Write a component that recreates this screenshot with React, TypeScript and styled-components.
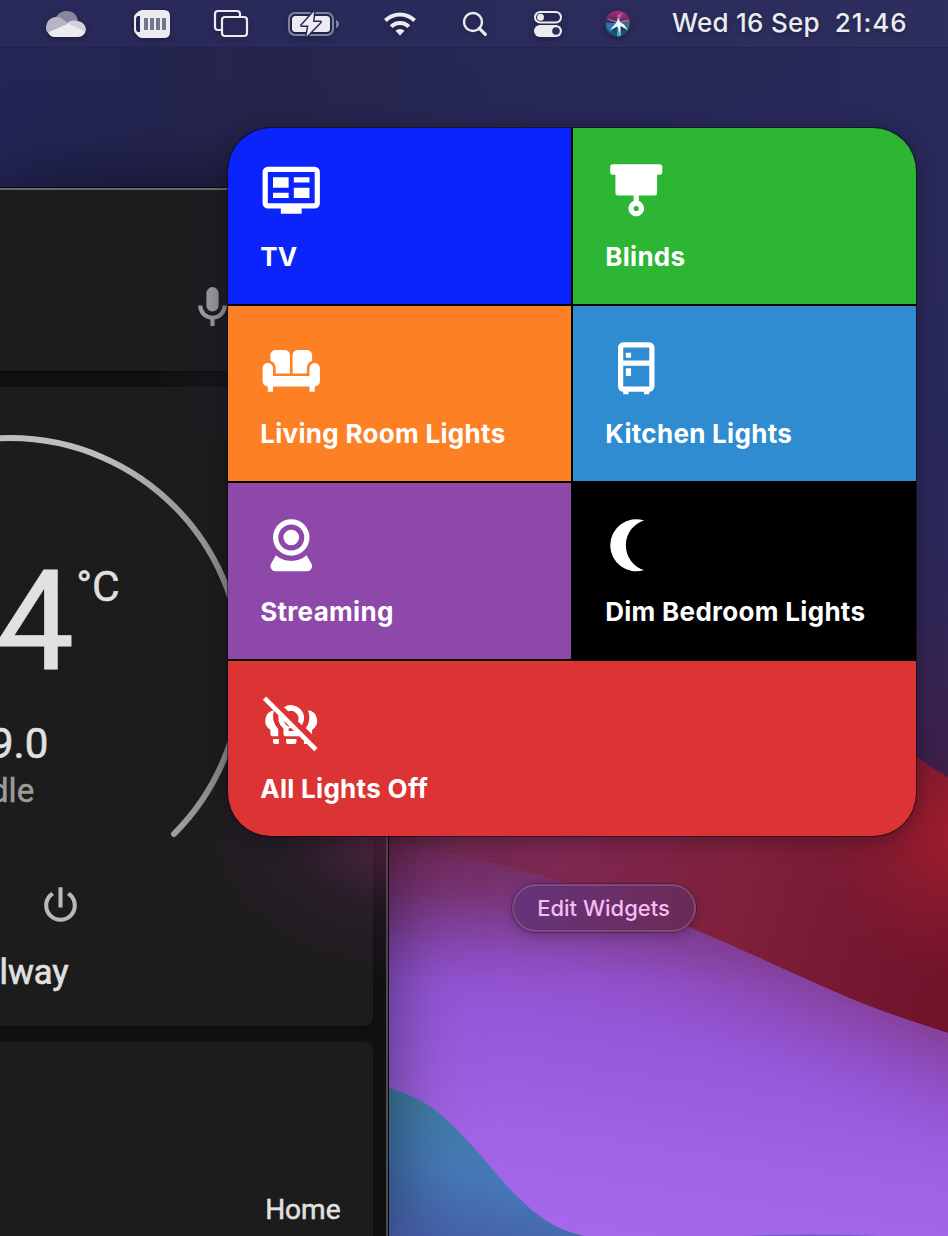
import React from 'react';
import styled, { createGlobalStyle } from 'styled-components';

const GlobalStyle = createGlobalStyle`
  * { box-sizing: border-box; }
  body { margin: 0; background: #25264f; }
`;

const Desktop = styled.main`
  position: relative;
  width: 948px;
  height: 1236px;
  overflow: hidden;
  background: #28295a;
  font-family: Inter, 'Liberation Sans', sans-serif;
`;

const WallpaperArt = styled.svg`
  position: absolute;
  inset: 0;
`;

/* ---------- menu bar ---------- */

const MenuBar = styled.header`
  position: relative;
  display: flex;
  align-items: center;
  height: 48px;
  padding-left: 46px;
  background: linear-gradient(90deg, #29295a 0%, #292b5b 40%, #2e2e5e 100%);
  border-bottom: 1px solid #26224f;
  color: #ebebf0;
`;

const StatusItem = styled.svg<{ $before?: number }>`
  flex: none;
  margin-left: ${(p) => p.$before ?? 0}px;
  overflow: visible;
  filter: drop-shadow(0 2px 3px rgba(0, 0, 0, 0.3));
`;

const Clock = styled.div`
  display: flex;
  gap: 15px;
  margin: -2px 0 0 41px;
  font-size: 26px;
  font-weight: 500;
  line-height: 32px;
  white-space: nowrap;
  text-shadow: 0 2px 4px rgba(0, 0, 0, 0.3);
`;

const ClockPart = styled.span<{ $tracking: number }>`
  letter-spacing: ${(p) => p.$tracking}px;
`;

/* ---------- dashboard window ---------- */

const Window = styled.section`
  position: absolute;
  left: 0;
  top: 187px;
  width: 389px;
  height: 1049px;
  display: flex;
  flex-direction: column;
  gap: 16px;
  padding-right: 14px;
  background: #111;
  border-top: 1px solid #08081c;
  border-right: 1px solid #08080a;
  box-shadow: inset -2px 0 0 #4c4c4e, inset 0 2px 0 #686b6b, 0 0 70px rgba(0, 0, 0, 0.5);
  font-family: Roboto, sans-serif;
  color: #e1e1e1;

  &::after {
    content: '';
    position: absolute;
    inset: 2px 0 0 0;
    pointer-events: none;
    background:
      radial-gradient(ellipse 215px 155px at 400px 640px, rgba(125, 45, 95, 0.62), rgba(80, 35, 80, 0.24) 50%, transparent 100%),
      linear-gradient(90deg, transparent 150px, rgba(32, 32, 48, 0.35) 228px) 0 0 / 100% 250px no-repeat;
  }
`;

const Card = styled.article<{ $height: number; $flat?: boolean }>`
  position: relative;
  flex: none;
  width: 373px;
  height: ${(p) => p.$height}px;
  background: #1c1c1c;
  border-radius: ${(p) => (p.$flat ? '0' : '0 8px 8px 0')};
  box-shadow: 0 2px 3px rgba(0, 0, 0, 0.35);
  overflow: hidden;
`;

const SearchCard = styled(Card)`
  margin-top: 2px;
  display: flex;
  align-items: flex-start;
  padding: 93px 0 0 188px;
`;

const ThermostatCard = styled(Card)`
  padding-top: 165px;
`;

const Dial = styled.svg`
  position: absolute;
  inset: 0;
`;

const Temperature = styled.div`
  display: flex;
  align-items: flex-start;
  margin-left: -4px;
  height: 171px;
  font-size: 139px;
  line-height: 139px;
  -webkit-text-stroke: 0.8px currentColor;
`;

const Unit = styled.sup`
  margin: 13px 0 0 2px;
  font-size: 42.5px;
  line-height: 43px;
  vertical-align: baseline;
  -webkit-text-stroke: 0.4px currentColor;
`;

const Target = styled.div`
  margin-left: -10px;
  height: 51px;
  font-size: 42px;
  line-height: 42px;
  -webkit-text-stroke: 0.6px currentColor;
`;

const Mode = styled.div`
  margin-left: -10px;
  height: 107px;
  font-size: 33px;
  line-height: 33px;
  color: #9b9b9b;
  -webkit-text-stroke: 0.5px currentColor;
`;

const PowerRow = styled.div`
  height: 74px;
  padding-left: 36px;
`;

const RoomName = styled.div`
  margin-left: -0.5px;
  font-size: 34.5px;
  line-height: 35px;
  -webkit-text-stroke: 0.7px currentColor;
`;

const HomeCard = styled(Card)`
  display: flex;
  justify-content: flex-end;
  padding: 154px 32.5px 0 0;
  font-size: 28px;
  line-height: 28px;
  -webkit-text-stroke: 0.5px currentColor;
`;

/* ---------- widget ---------- */

const WidgetColumn = styled.aside`
  position: absolute;
  left: 228px;
  top: 128px;
  width: 688px;
  display: flex;
  flex-direction: column;
  align-items: center;
  gap: 48px;
`;

const Widget = styled.div`
  width: 688px;
  height: 708px;
  display: grid;
  grid-template-columns: 343px 343px;
  grid-template-rows: repeat(4, 1fr);
  gap: 2px;
  overflow: hidden;
  border-radius: 43px;
  background: #000;
  box-shadow: 0 0 0 1px rgba(10, 8, 20, 0.55), 0 4px 22px rgba(0, 0, 0, 0.32);
`;

const Tile = styled.button<{ $color: string; $wide?: boolean }>`
  display: flex;
  flex-direction: column;
  align-items: flex-start;
  gap: 21.7px;
  padding: 31.4px 0 0 31.5px;
  border: 0;
  grid-column: ${(p) => (p.$wide ? '1 / -1' : 'auto')};
  background: ${(p) => p.$color};
  color: #fff;
  font: 650 26px/26px Inter, 'Liberation Sans', sans-serif;
  letter-spacing: 0.3px;
  text-align: left;
`;

const Glyph = styled.svg`
  flex: none;
  width: 62.5px;
  height: 62.5px;
  fill: currentColor;
`;

const TileLabel = styled.span`
  margin-left: 0.7px;
  padding-top: 0.2px;
  white-space: nowrap;
`;

const EditButton = styled.button`
  width: 184px;
  height: 48px;
  margin-left: 64px;
  border-radius: 24px;
  border: 2px solid rgba(175, 120, 175, 0.34);
  background: linear-gradient(90deg, #64347a, #6a2f66 55%, #6b2a55);
  box-shadow: 0 0 0 1px rgba(50, 15, 50, 0.5), 0 4px 12px rgba(0, 0, 0, 0.2);
  color: #f3bdf3;
  font: 480 22px/24px Inter, 'Liberation Sans', sans-serif;
  padding: 0 1px 0 0;
  white-space: nowrap;
`;

const tiles: { label: string; color: string; wide?: boolean; icon: React.ReactNode }[] = [
  {
    label: 'TV',
    color: '#0b24fb',
    icon: (
      <path d="M21,17V5H3V17H21M21,3A2,2 0 0,1 23,5V17A2,2 0 0,1 21,19H16V21H8V19H3A2,2 0 0,1 1,17V5A2,2 0 0,1 3,3H21M5,7H11V11H5V7M5,13H11V15H5V13M13,7H19V9H13V7M13,11H19V15H13V11Z" />
    ),
  },
  {
    label: 'Blinds',
    color: '#2db534',
    icon: (
      <path
        fillRule="evenodd"
        d="M3 2H21A1 1 0 0 1 22 3V5A1 1 0 0 1 21 6H20V13A1 1 0 0 1 19 14H13V16.17A3 3 0 1 1 11 16.17V14H5A1 1 0 0 1 4 13V6H3A1 1 0 0 1 2 5V3A1 1 0 0 1 3 2ZM12 18A1 1 0 0 0 12 20A1 1 0 0 0 12 18Z"
      />
    ),
  },
  {
    label: 'Living Room Lights',
    color: '#fd8024',
    icon: (
      <path d="M12.5 7C12.5 5.89 13.39 5 14.5 5H18C19.1 5 20 5.9 20 7V9.16C18.84 9.57 18 10.67 18 11.97V14H12.5V7M6 11.96V14H11.5V7C11.5 5.89 10.61 5 9.5 5H6C4.9 5 4 5.9 4 7V9.15C5.16 9.56 6 10.67 6 11.96M20.66 10.03C19.68 10.19 19 11.12 19 12.12V15H5V12C5 10.9 4.11 10 3 10S1 10.9 1 12V17C1 18.1 1.9 19 3 19V21H5V19H19V21H21V19C22.1 19 23 18.1 23 17V12C23 10.79 21.91 9.82 20.66 10.03Z" />
    ),
  },
  {
    label: 'Kitchen Lights',
    color: '#2f8cd0',
    icon: (
      <path d="M9,21V22H7V21A2,2 0 0,1 5,19V4A2,2 0 0,1 7,2H17A2,2 0 0,1 19,4V19A2,2 0 0,1 17,21V22H15V21H9M7,4V9H17V4H7M7,19H17V11H7V19M8,12H10V15H8V12M8,6H10V8H8V6Z" />
    ),
  },
  {
    label: 'Streaming',
    color: '#8d48aa',
    icon: (
      <path d="M12,2A7,7 0 0,1 19,9A7,7 0 0,1 12,16A7,7 0 0,1 5,9A7,7 0 0,1 12,2M12,4A5,5 0 0,0 7,9A5,5 0 0,0 12,14A5,5 0 0,0 17,9A5,5 0 0,0 12,4M12,6A3,3 0 0,1 15,9A3,3 0 0,1 12,12A3,3 0 0,1 9,9A3,3 0 0,1 12,6M6,22A2,2 0 0,1 4,20C4,19.62 4.1,19.27 4.29,18.97L6.11,15.81C7.69,17.17 9.75,18 12,18C14.25,18 16.31,17.17 17.89,15.81L19.71,18.97C19.9,19.27 20,19.62 20,20A2,2 0 0,1 18,22H6Z" />
    ),
  },
  {
    label: 'Dim Bedroom Lights',
    color: '#000',
    icon: <path d="M2 12A10 10 0 0 0 15 21.54A10 10 0 0 1 15 2.46A10 10 0 0 0 2 12Z" />,
  },
  {
    label: 'All Lights Off',
    color: '#dc3434',
    wide: true,
    icon: (
      <>
        <path d="M2.39 1.73L22.11 21.46L20.84 22.73L1.11 3Z" />
        <path d="M5.4 7.05A4 4 0 0 0 4 14.46V16A1 1 0 0 0 5 17H7V14.2A7.1 7.1 0 0 1 5.4 7.05Z" />
        <path d="M5 18H7.2V20H6A1 1 0 0 1 5 19ZM10 18H14V19A1 1 0 0 1 13 20H11A1 1 0 0 1 10 19Z" />
        <path d="M9.2 5.85A5 5 0 0 1 16.1 12.8L14.6 11.3A3 3 0 0 0 10.8 7.4Z" />
        <path
          fillRule="evenodd"
          d="M7.4 8.1A5 5 0 0 0 9 14V16A1 1 0 0 0 10 17H14L16.4 17L9.3 9.9ZM9.2 10.5L11.6 13L11 13.3A3 3 0 0 1 9.2 10.5ZM11 15V13.9L12.3 13.8L13.6 15Z"
        />
        <path d="M18.4 7.05A4 4 0 0 1 20 14.46V16.2L17.6 13.9A7.1 7.1 0 0 0 18.4 7.05Z" />
        <path d="M16.9 18.3L18.6 20H16.9Z" />
      </>
    ),
  },
];

const WAVE =
  'M380 840C440 852 520 868 580 888C640 908 665 917 691 928C750 953 800 977 849 998C885 1013 920 1024 948 1033V1236H380Z';

function Wallpaper() {
  return (
    <WallpaperArt width="948" height="1236" viewBox="0 0 948 1236" aria-hidden>
      <defs>
        <linearGradient id="sky" x1="0" y1="0" x2="0" y2="1">
          <stop offset="0" stopColor="#2a2a5a" />
          <stop offset="0.35" stopColor="#29285b" />
          <stop offset="0.48" stopColor="#2d2758" />
          <stop offset="0.56" stopColor="#38234f" />
          <stop offset="0.62" stopColor="#3c1f48" />
        </linearGradient>
        <linearGradient id="dusk" x1="0" x2="1">
          <stop offset="0" stopColor="#222454" stopOpacity="0.8" />
          <stop offset="0.14" stopColor="#22234e" stopOpacity="0.8" />
          <stop offset="0.3" stopColor="#232344" stopOpacity="0.7" />
          <stop offset="0.5" stopColor="#242450" stopOpacity="0.5" />
          <stop offset="1" stopColor="#242450" stopOpacity="0" />
        </linearGradient>
        <linearGradient id="red" x1="390" y1="840" x2="948" y2="1000" gradientUnits="userSpaceOnUse">
          <stop offset="0" stopColor="#6a2a54" />
          <stop offset="0.3" stopColor="#7e2751" />
          <stop offset="0.6" stopColor="#7f203c" />
          <stop offset="1" stopColor="#70122a" />
        </linearGradient>
        <radialGradient id="ember" cx="965" cy="835" r="150" gradientUnits="userSpaceOnUse">
          <stop offset="0" stopColor="#a51e2b" />
          <stop offset="1" stopColor="#8a1c30" stopOpacity="0" />
        </radialGradient>
        <linearGradient id="violet" x1="640" y1="900" x2="590" y2="1236" gradientUnits="userSpaceOnUse">
          <stop offset="0" stopColor="#84428f" />
          <stop offset="0.22" stopColor="#9150c8" />
          <stop offset="0.4" stopColor="#9558da" />
          <stop offset="0.75" stopColor="#a263e4" />
          <stop offset="1" stopColor="#a568eb" />
        </linearGradient>
        <linearGradient id="haze" x1="0" y1="850" x2="0" y2="985" gradientUnits="userSpaceOnUse">
          <stop offset="0" stopColor="#722a58" />
          <stop offset="0.3" stopColor="#75306c" stopOpacity="0.85" />
          <stop offset="0.6" stopColor="#743680" stopOpacity="0.45" />
          <stop offset="1" stopColor="#7a40a0" stopOpacity="0" />
        </linearGradient>
        <linearGradient id="edge" x1="820" y1="985" x2="775" y2="1090" gradientUnits="userSpaceOnUse">
          <stop offset="0" stopColor="#85409a" stopOpacity="0.9" />
          <stop offset="1" stopColor="#9555da" stopOpacity="0" />
        </linearGradient>
        <linearGradient id="sea" x1="440" y1="1090" x2="410" y2="1236" gradientUnits="userSpaceOnUse">
          <stop offset="0" stopColor="#3f7fa2" />
          <stop offset="0.5" stopColor="#467ab8" />
          <stop offset="1" stopColor="#465fa8" />
        </linearGradient>
      </defs>
      <rect width="948" height="1236" fill="url(#sky)" />
      <rect y="48" width="948" height="170" fill="url(#dusk)" />
      <path d="M380 700H860Q905 755 948 777V1236H380Z" fill="url(#red)" />
      <path d="M800 700H860Q905 755 948 777V1000H800Z" fill="url(#ember)" />
      <path d={WAVE} fill="url(#violet)" />
      <path d={WAVE} fill="url(#edge)" />
      <path d={WAVE} fill="url(#haze)" />
      <path d="M380 1085C405 1092 425 1101 440 1114C475 1144 492 1172 520 1199C540 1219 560 1232 590 1237H380Z" fill="url(#sea)" />
      <path d="M740 1236Q810 1233 880 1236Z" fill="#6d5bc8" />
    </WallpaperArt>
  );
}

function StatusIcons() {
  const ink = '#ebebf0';
  return (
    <>
      <StatusItem width="40" height="26" viewBox="0 0 40 26">
        <path d="M9 8C12 2 16 0 21 0C27 0 31 4 32 10L22 14L9 9Z" fill="#87889f" />
        <path d="M0 17C0 11 4 6 10 6C14 6 17 8 22 12.500L3 22.500C1 21 0 20 0 17Z" fill="#b6b6c4" />
        <path d="M20 13C24 9 28 9 31 10C36 10 40 14 40 19L38 23Z" fill="#d0d0da" />
        <path d="M2 21.500L22 12.500L39.500 21C38 24 35 26 32 26H9C6 26 3.500 24.500 2 21.500Z" fill={ink} />
      </StatusItem>
      <StatusItem $before={48} width="36" height="28" viewBox="0 0 36 28">
        <path d="M8 0H30Q36 0 36 6V22Q36 28 30 28H8Q5 28 2 24Q0 22 0 20V7Q0 5 2 3.500Q5 0 8 0Z" fill={ink} />
        <path d="M3.500 6H6V22H3.500Q2 21 2 19V9Q2 7 3.500 6Z" fill="#25265a" />
        <path d="M10 8H14V20H10ZM16 8H20V20H16ZM22 8H26V20H22ZM28 8H32V20H28Z" fill="#75768f" />
      </StatusItem>
      <StatusItem $before={44} width="34" height="27" viewBox="0 0 34 27" fill="none" stroke={ink} strokeWidth="2.200">
        <path d="M7 20H4Q1 20 1 17V4Q1 1 4 1H23Q26 1 26 4V6" />
        <rect x="8" y="7" width="25" height="19" rx="3" />
      </StatusItem>
      <StatusItem $before={40} width="51" height="24" viewBox="0 0 51 24">
        <rect x="1" y="1" width="44" height="22" rx="6" fill="none" stroke="#81829c" strokeWidth="2" />
        <path d="M48 8V16Q51 15 51 12Q51 9 48 8Z" fill="#81829c" />
        <rect x="4" y="4" width="38" height="16" rx="3.500" fill={ink} />
        <path d="M26 -0.500L13.500 13.500H20.500L18.500 24.500L32.500 10H25Z" fill={ink} stroke="#292b5b" strokeWidth="3" strokeLinejoin="round" paintOrder="stroke" />
      </StatusItem>
      <StatusItem $before={45} width="32" height="24" viewBox="0 0 32 24" fill="none" stroke={ink} strokeWidth="4">
        <path d="M1.400 8.500A20.500 20.500 0 0 1 30.600 8.500" />
        <path d="M7.200 14.700A12.300 12.300 0 0 1 24.800 14.700" />
        <path d="M11.500 18.800A6.500 6.500 0 0 1 20.500 18.800L16 23.600Z" fill={ink} stroke="none" />
      </StatusItem>
      <StatusItem $before={47} width="24" height="24" viewBox="0 0 24 24" fill="none" stroke={ink}>
        <circle cx="10" cy="10" r="9" strokeWidth="2.400" />
        <path d="M16.300 16.300L22.300 22.300" strokeWidth="3.200" strokeLinecap="round" />
      </StatusItem>
      <StatusItem $before={47} width="28" height="26" viewBox="0 0 28 26">
        <rect x="1" y="1" width="26" height="10.500" rx="5.250" fill="none" stroke={ink} strokeWidth="2" />
        <circle cx="6.500" cy="6.250" r="3.500" fill={ink} />
        <rect y="14" width="28" height="12" rx="6" fill={ink} />
        <circle cx="22" cy="20" r="3.800" fill="#2b2c5c" />
      </StatusItem>
      <StatusItem $before={42} width="27" height="27" viewBox="0 0 27 27">
        <defs>
          <linearGradient id="siri" x1="0.600" y1="0" x2="0.400" y2="1">
            <stop offset="0" stopColor="#b52d78" />
            <stop offset="0.400" stopColor="#4a3266" />
            <stop offset="0.600" stopColor="#25365f" />
            <stop offset="1" stopColor="#1d5684" />
          </linearGradient>
        </defs>
        <circle cx="13.500" cy="13.500" r="12.800" fill="url(#siri)" />
        <path d="M14 13L2 13Q2 20 7 22Z" fill="#2f8fc9" opacity="0.700" />
        <path d="M14 13L23 21Q26 17 25.500 12Z" fill="#2a8f80" opacity="0.700" />
        <path d="M14 13L13 26Q15.500 27 17 25.500Z" fill="#4fd6a6" opacity="0.800" />
        <path d="M14 13L18.500 3L13 5Z" fill="#e0639f" opacity="0.750" />
        <path d="M4 9L14 12.500L25 10.500" stroke="#d55a98" strokeWidth="1.300" fill="none" />
        <path d="M14.500 8L16 12L20 14.500L24 20L16.500 16L16.500 25L13.500 16.500L6 20L12 13Z" fill="#e6fbff" />
      </StatusItem>
    </>
  );
}

export default function App() {
  return (
    <>
      <GlobalStyle />
      <Desktop>
        <Wallpaper />
        <MenuBar>
          <StatusIcons />
          <Clock>
            <ClockPart $tracking={0.25}>Wed 16 Sep</ClockPart>
            <ClockPart $tracking={0.9}>21:46</ClockPart>
          </Clock>
        </MenuBar>

        <Window>
          <SearchCard $height={181} $flat>
            <svg width="49" height="49" viewBox="0 0 24 24" fill="#c0c0c0">
              <path d="M12,2A3,3 0 0,1 15,5V11A3,3 0 0,1 12,14A3,3 0 0,1 9,11V5A3,3 0 0,1 12,2M19,11C19,14.53 16.39,17.44 13,17.93V21H11V17.93C7.61,17.44 5,14.53 5,11H7A5,5 0 0,0 12,16A5,5 0 0,0 17,11H19Z" />
            </svg>
          </SearchCard>
          <ThermostatCard $height={639}>
            <Dial width="373" height="639" viewBox="0 387 373 639">
              <defs>
                <linearGradient id="rim" x1="100" x2="235" y1="0" y2="0" gradientUnits="userSpaceOnUse">
                  <stop offset="0" stopColor="#bebebe" />
                  <stop offset="1" stopColor="#858585" />
                </linearGradient>
              </defs>
              <path d="M-154 834A232 232 0 1 1 174 834" fill="none" stroke="url(#rim)" strokeWidth="6" strokeLinecap="round" />
            </Dial>
            <Temperature>
              4<Unit>°C</Unit>
            </Temperature>
            <Target>9.0</Target>
            <Mode>dle</Mode>
            <PowerRow>
              <svg width="49" height="49" viewBox="0 0 24 24" fill="#b9b9b9">
                <path d="M16.56,5.44L15.11,6.89C16.84,7.94 18,9.83 18,12A6,6 0 0,1 12,18A6,6 0 0,1 6,12C6,9.83 7.16,7.94 8.88,6.88L7.44,5.44C5.36,6.88 4,9.28 4,12A8,8 0 0,0 12,20A8,8 0 0,0 20,12C20,9.28 18.64,6.88 16.56,5.44M13,3H11V13H13" />
              </svg>
            </PowerRow>
            <RoomName>lway</RoomName>
          </ThermostatCard>
          <HomeCard $height={220}>Home</HomeCard>
        </Window>

        <WidgetColumn>
          <Widget>
            {tiles.map((tile) => (
              <Tile key={tile.label} $color={tile.color} $wide={tile.wide}>
                <Glyph viewBox="0 0 24 24">{tile.icon}</Glyph>
                <TileLabel>{tile.label}</TileLabel>
              </Tile>
            ))}
          </Widget>
          <EditButton>Edit Widgets</EditButton>
        </WidgetColumn>
      </Desktop>
    </>
  );
}
